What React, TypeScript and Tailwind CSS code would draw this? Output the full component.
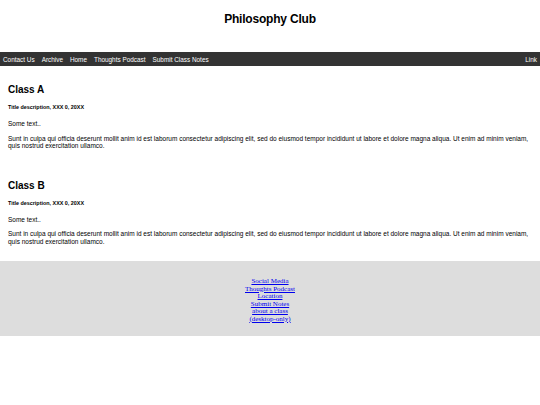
import React from 'react';

const classes = [
  { name: 'Class A' },
  { name: 'Class B' },
];

const LOREM =
  'Sunt in culpa qui officia deserunt mollit anim id est laborum consectetur adipiscing elit, sed do eiusmod tempor incididunt ut labore et dolore magna aliqua. Ut enim ad minim veniam, quis nostrud exercitation ullamco.';

const navLinks = ['Contact Us', 'Archive', 'Home', 'Thoughts Podcast', 'Submit Class Notes'];

const footerLinks = ['Social Media', 'Thoughts Podcast', 'Location', 'Submit Notes', 'about a class', '(desktop-only)'];

const App: React.FC = () => {
  return (
    <div className="min-h-[405px] bg-white text-black font-['Liberation_Sans',Arial,sans-serif]">
      {/* header */}
      <header className="flex h-[52px] items-center justify-center pb-[14px]">
        <h1 className="text-[12px] font-bold tracking-[-0.2px]">Philosophy Club</h1>
      </header>

      {/* nav */}
      <nav className="flex h-[14px] items-center justify-between bg-[#333333] px-[3px] pt-[1px] text-[6.4px] text-white">
        <div className="flex gap-[7px]">
          {navLinks.map((l) => (
            <a key={l} href="#">{l}</a>
          ))}
        </div>
        <a href="#">Link</a>
      </nav>

      {/* classes */}
      <main className="px-[8px] pt-[18px]">
        {classes.map((c) => (
          <section key={c.name} className="pb-[30px] last:pb-[16px]">
            <h2 className="text-[10px] font-bold leading-[12px]">{c.name}</h2>
            <h5 className="mt-[8px] text-[5.4px] font-bold leading-[7px]">Title description, XXX 0, 20XX</h5>
            <p className="mt-[9px] text-[6.5px] leading-[7.5px]">Some text..</p>
            <p className="mt-[7px] text-[6.5px] leading-[7.5px]">{LOREM}</p>
          </section>
        ))}
      </main>

      {/* footer */}
      <footer className="flex h-[75px] flex-col items-center justify-center bg-[#dddddd] pt-[4px] font-['Liberation_Serif','Times_New_Roman',serif] text-[7px] leading-[7.5px]">
        {footerLinks.map((l) => (
          <a key={l} href="#" className="text-[#0000ee] underline">{l}</a>
        ))}
      </footer>
    </div>
  );
};

export default App;
